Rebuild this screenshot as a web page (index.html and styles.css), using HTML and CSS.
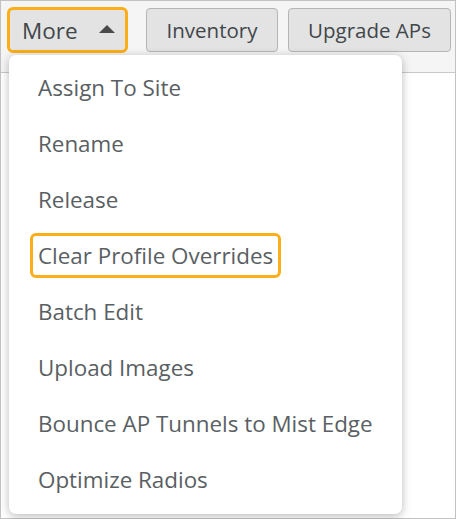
FILE: index.html
```html
<!DOCTYPE html>
<html>
<head>
<meta charset="utf-8">
<link rel="stylesheet" href="styles.css">
</head>
<body>
<div class="frame">
  <div class="toolbar">
    <button class="btn btn-more">More <span class="caret"></span></button>
    <button class="btn btn-inv">Inventory</button>
    <button class="btn btn-up">Upgrade APs</button>
  </div>
  <div class="content"></div>
  <ul class="menu">
    <li class="item"><span class="label">Assign To Site</span></li>
    <li class="item"><span class="label">Rename</span></li>
    <li class="item"><span class="label">Release</span></li>
    <li class="item"><span class="label label-focus">Clear Profile Overrides</span></li>
    <li class="item"><span class="label">Batch Edit</span></li>
    <li class="item"><span class="label">Upload Images</span></li>
    <li class="item"><span class="label">Bounce AP Tunnels to Mist Edge</span></li>
    <li class="item"><span class="label">Optimize Radios</span></li>
  </ul>
</div>
</body>
</html>
```

FILE: styles.css
```css
* { box-sizing: border-box; }
html, body { margin: 0; padding: 0; background: #fff; }
body { font-family: "Open Sans", "Noto Sans", sans-serif; }

.frame {
  position: relative;
  width: 456px;
  height: 519px;
  border: 1px solid #c2c2c2;
  display: flex;
  flex-direction: column;
  background: #fff;
}

.toolbar {
  height: 72px;
  flex: none;
  background: #f5f5f5;
  border-bottom: 1px solid #c9c9c9;
  display: flex;
  align-items: flex-start;
  padding: 6px 0 0 6px;
}

.btn {
  font-family: "Open Sans", "Noto Sans", sans-serif;
  font-size: 20.5px;
  color: #41464a;
  background: #e3e3e3;
  border: 1px solid #b5b5b5;
  border-radius: 4px;
  height: 44px;
  padding: 0 19px;
  display: flex;
  align-items: center;
  margin: 0;
}

.btn-more {
  font-size: 22.5px;
  border: 3px solid #fbae17;
  border-radius: 6px;
  height: 46px;
  width: 121px;
  padding: 0 0 0 12px;
  margin-right: 18px;
}

.caret {
  width: 0;
  height: 0;
  border-left: 8px solid transparent;
  border-right: 8px solid transparent;
  border-bottom: 8px solid #4a4a4a;
  margin-left: 21px;
  margin-top: -2px;
}

.btn-inv { width: 132px; justify-content: center; padding: 0; margin-right: 10px; margin-top: 1px; }
.btn-up { width: 163px; justify-content: center; padding: 0; margin-top: 1px; }

.content { flex: 1; }

.menu {
  position: absolute;
  left: 8px;
  top: 54px;
  width: 393px;
  height: 459px;
  margin: 0;
  padding: 4px 0 0;
  list-style: none;
  background: #fff;
  border-radius: 7px;
  box-shadow: 0 2px 10px rgba(0,0,0,0.28);
}

.item {
  height: 56px;
  display: flex;
  align-items: center;
  padding-left: 21px;
  font-size: 22.4px;
  color: #5a5f63;
}

.label {
  border: 3px solid transparent;
  border-radius: 6px;
  padding: 3px 5px 3px;
  line-height: 33px;
}

.label-focus { border-color: #fbae17; }
```
